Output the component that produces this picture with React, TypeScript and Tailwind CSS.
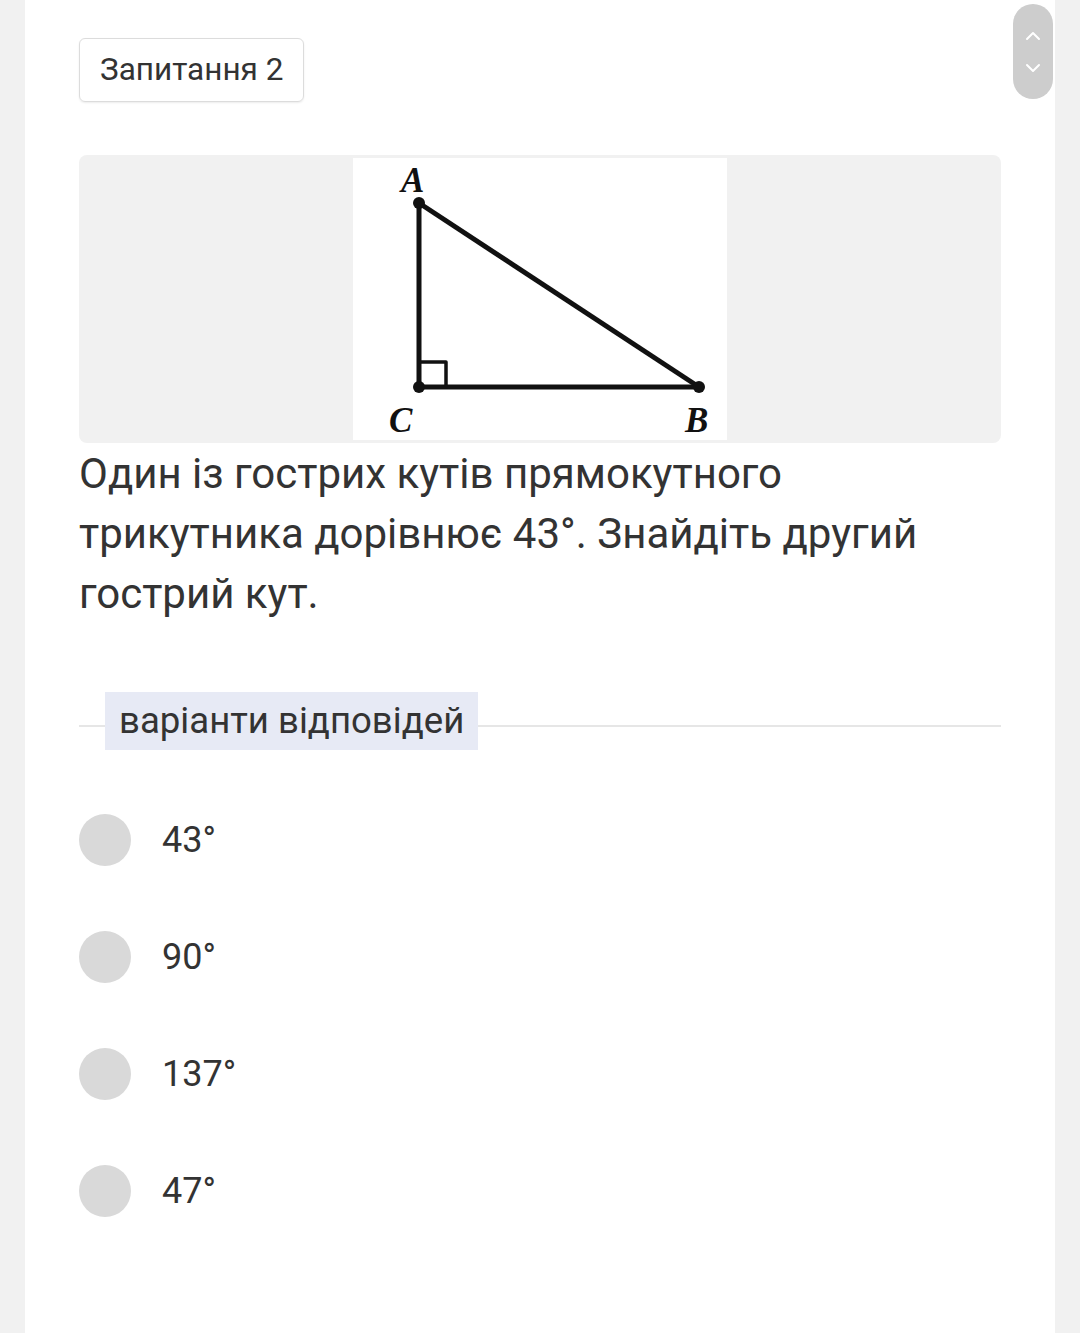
import { ChevronUp, ChevronDown } from "lucide-react";

function Triangle() {
  return (
    <svg width="374" height="282" viewBox="0 0 374 282" className="block">
      <rect width="374" height="282" fill="#fff" />
      <g stroke="#111" strokeWidth="5" fill="none" strokeLinejoin="round">
        <line x1="66" y1="45" x2="66" y2="229" />
        <line x1="66" y1="229" x2="346" y2="229" />
        <line x1="66" y1="45" x2="346" y2="229" />
        <polyline points="66,204 93,204 93,229" strokeWidth="3.5" />
      </g>
      <circle cx="66" cy="45" r="6" fill="#111" />
      <circle cx="66" cy="229" r="6" fill="#111" />
      <circle cx="346" cy="229" r="6" fill="#111" />
      <g fontFamily="'Liberation Serif', serif" fontStyle="italic" fontWeight="bold" fontSize="35" fill="#111">
        <text x="48" y="34">A</text>
        <text x="36" y="274">C</text>
        <text x="332" y="274">B</text>
      </g>
    </svg>
  );
}

function Option({ label }: { label: string }) {
  return (
    <div className="flex items-center gap-[31px] h-[117px]">
      <span className="w-[52px] h-[52px] rounded-full bg-[#d9d9d9]" />
      <span className="text-[36px] text-[#333]">{label}</span>
    </div>
  );
}

export default function App() {
  return (
    <div className="min-h-[1333px] bg-[#f1f1f1] flex justify-center font-['Roboto',sans-serif]">
      <div className="relative w-[1030px] bg-white pl-[54px] pr-[54px] pt-[38px]">
        <div className="absolute right-[2px] top-[4px] w-[40px] h-[95px] rounded-full bg-[#cdcdcd] flex flex-col items-center justify-center gap-[8px] text-white">
          <ChevronUp size={24} strokeWidth={2} />
          <ChevronDown size={24} strokeWidth={2} />
        </div>

        <div className="inline-flex items-center h-[64px] px-[20px] border border-[#dcdcdc] rounded-[6px] shadow-[0_1px_2px_rgba(0,0,0,0.08)] text-[31.5px] text-[#333]">
          Запитання 2
        </div>

        <div className="mt-[53px] w-[922px] h-[288px] bg-[#f1f1f1] rounded-[8px] flex justify-center items-center">
          <Triangle />
        </div>

        <p className="mt-[1px] text-[42px] leading-[60px] text-[#333] w-[900px]">
          Один із гострих кутів прямокутного трикутника дорівнює 43°. Знайдіть другий гострий кут.
        </p>

        <div className="mt-[68px] w-[922px] flex items-center">
          <div className="w-[26px] h-[2px] mt-[10px] bg-[#e6e6e6]" />
          <div className="h-[58px] px-[14px] flex items-center bg-[#e7eaf5] text-[36.6px] text-[#333]">
            варіанти відповідей
          </div>
          <div className="flex-1 h-[2px] mt-[10px] bg-[#e6e6e6]" />
        </div>

        <div className="mt-[31px] flex flex-col">
          <Option label="43°" />
          <Option label="90°" />
          <Option label="137°" />
          <Option label="47°" />
        </div>
      </div>
    </div>
  );
}
